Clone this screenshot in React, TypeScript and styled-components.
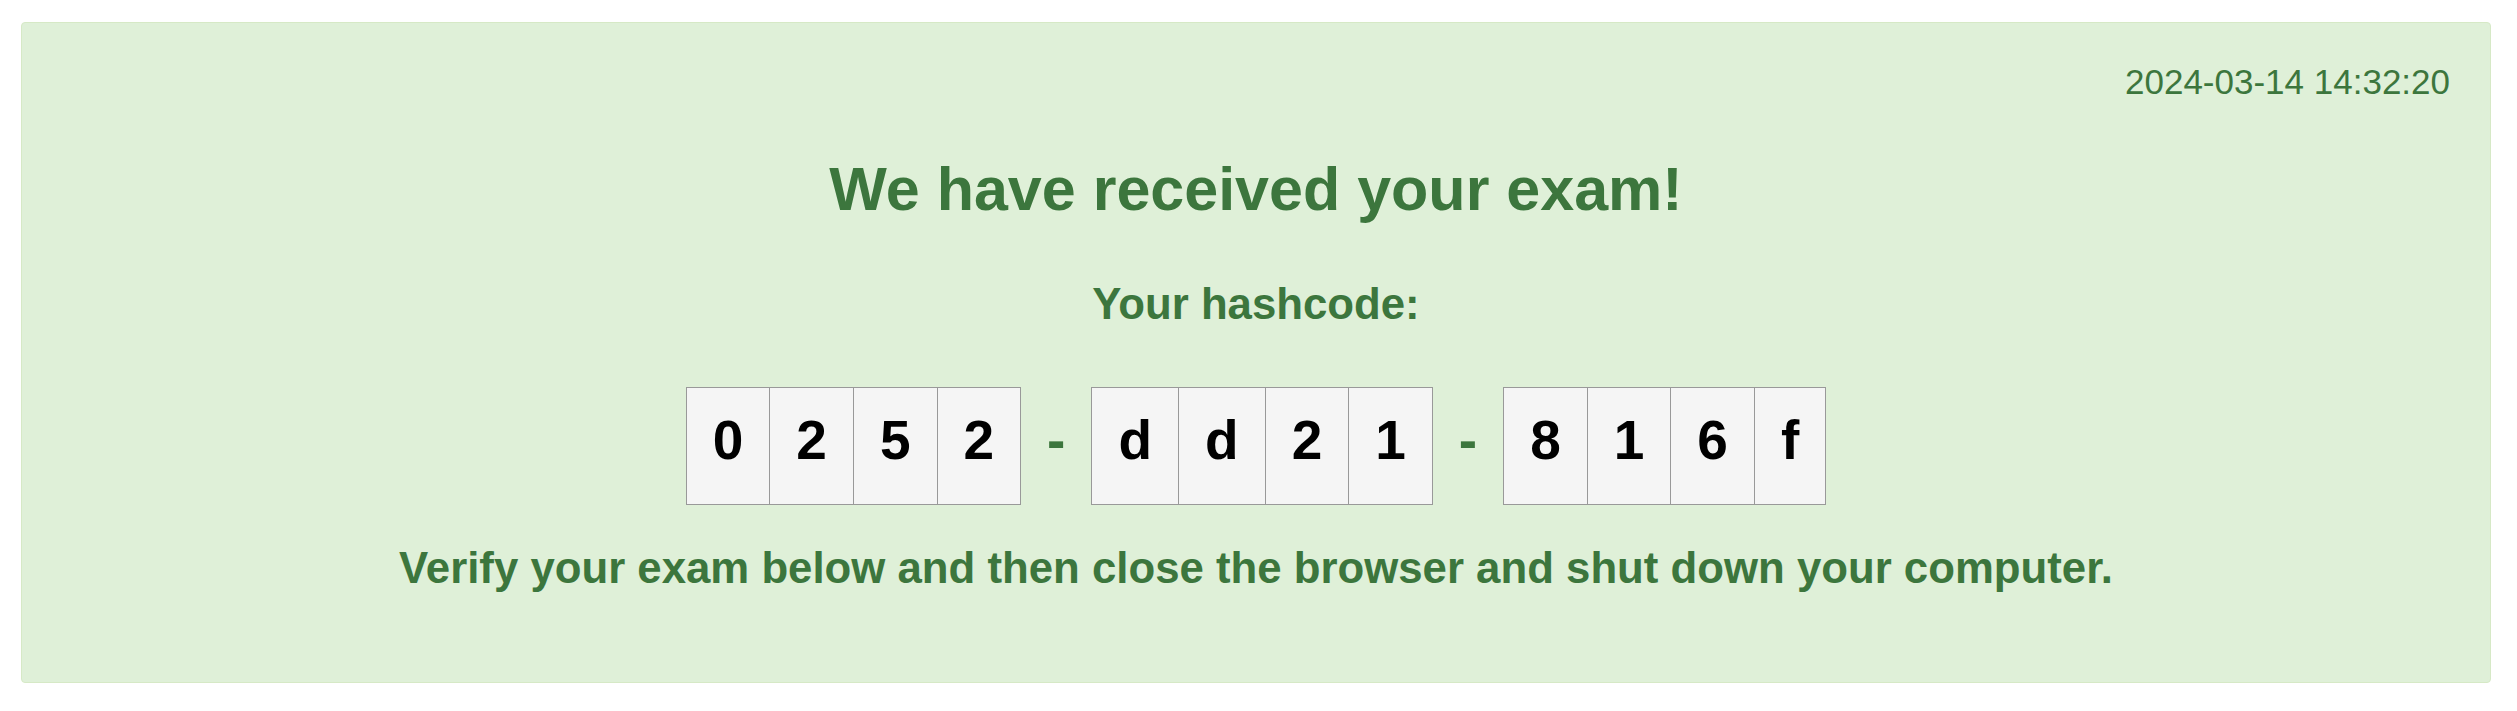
import React from 'react'
import styled, { createGlobalStyle } from 'styled-components'

const hash = ['0252', 'dd21', '816f']

export default function App() {
    return (
        <>
            <GlobalStyle />
            <Alert>
                <Stamp>2024-03-14 14:32:20</Stamp>
                <Title>We have received your exam!</Title>
                <SubTitle>Your hashcode:</SubTitle>
                <HashRow>
                    {hash.map((group, i) => (
                        <React.Fragment key={group}>
                            {i > 0 && <Dash>-</Dash>}
                            <Group>
                                {group.split('').map((c, j) => (
                                    <Cell key={j}>{c}</Cell>
                                ))}
                            </Group>
                        </React.Fragment>
                    ))}
                </HashRow>
                <Note>Verify your exam below and then close the browser and shut down your computer.</Note>
            </Alert>
        </>
    )
}

const GlobalStyle = createGlobalStyle`
body {
    margin: 0;
    background: #ffffff;
    font-family: "Liberation Sans", Arial, sans-serif;
}
`

const Alert = styled.div`
display: flex;
flex-direction: column;
align-items: center;
margin: 22px 26px 0 21px;
padding: 41px 40px 92px 40px;
background: #dff0d8;
border: 1px solid #d6e9c6;
border-radius: 4px;
color: #3c763d;
`

const Stamp = styled.div`
align-self: flex-end;
font-size: 35px;
line-height: 1;
`

const Title = styled.h3`
margin: 60px 0 0 0;
font-size: 61px;
line-height: 1;
font-weight: bold;
`

const SubTitle = styled.h4`
margin: 62px 0 0 0;
font-size: 43.75px;
line-height: 1;
font-weight: bold;
`

const HashRow = styled.div`
display: flex;
align-items: flex-start;
margin-top: 61px;
font-size: 55px;
font-weight: bold;
line-height: 1;
`

const Group = styled.div`
display: flex;
border: 1px solid #999999;
`

const Cell = styled.div`
padding: 25px 26px 36px 26px;
background: #f5f5f5;
color: #000000;
& + & {
    border-left: 1px solid #999999;
}
`

const Dash = styled.div`
padding: 26px 26px 0 26px;
color: #3c763d;
`

const Note = styled.h4`
margin: 41px 0 0 0;
font-size: 43.75px;
line-height: 1;
font-weight: bold;
`
